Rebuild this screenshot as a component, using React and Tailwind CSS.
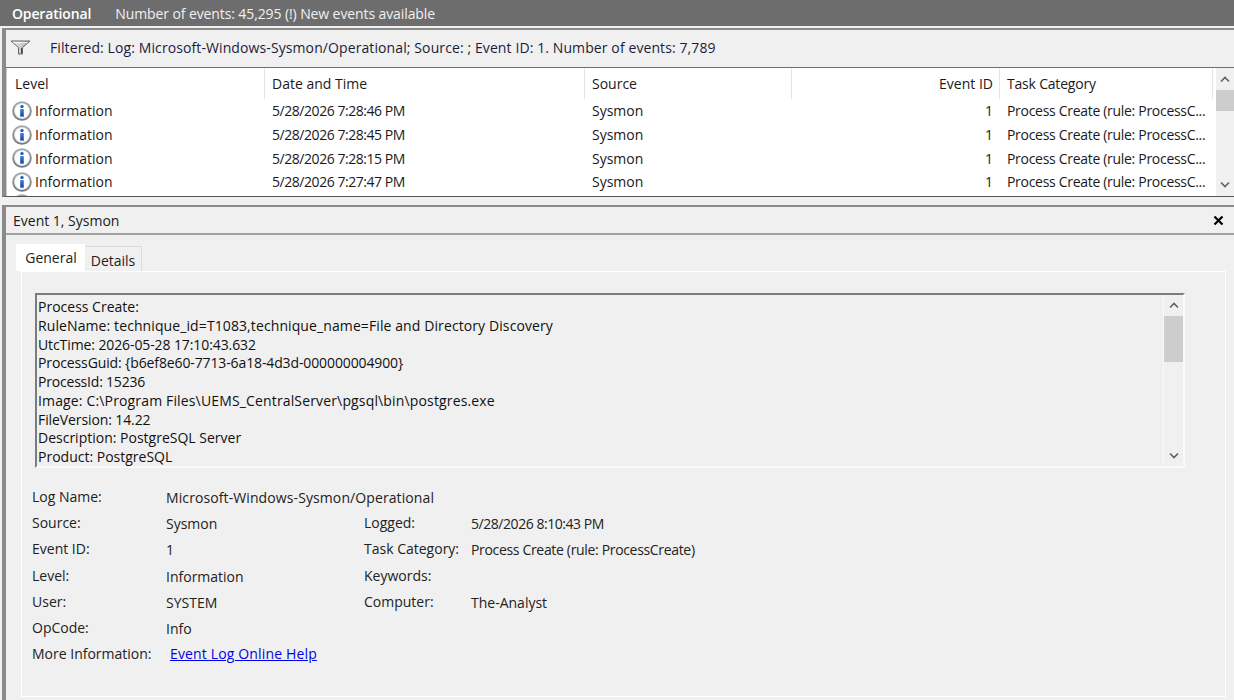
const font = { fontFamily: '"Open Sans", "Noto Sans", sans-serif' };

const rows = [
  "5/28/2026 7:28:46 PM",
  "5/28/2026 7:28:45 PM",
  "5/28/2026 7:28:15 PM",
  "5/28/2026 7:27:47 PM",
];

const messageLines = [
  ["Process Create:", "tracking-[0px]"],
  ["RuleName: technique_id=T1083,technique_name=File and Directory Discovery", "tracking-[0.1px]"],
  ["UtcTime: 2026-05-28 17:10:43.632", "tracking-[-0.1px]"],
  ["ProcessGuid: {b6ef8e60-7713-6a18-4d3d-000000004900}", "tracking-[-0.12px]"],
  ["ProcessId: 15236", "tracking-[-0.2px]"],
  ["Image: C:\\Program Files\\UEMS_CentralServer\\pgsql\\bin\\postgres.exe", "tracking-[0.15px]"],
  ["FileVersion: 14.22", "tracking-[-0.1px]"],
  ["Description: PostgreSQL Server", "tracking-[0px]"],
  ["Product: PostgreSQL", "tracking-[0px]"],
];

const InfoIcon = ({ id }) => (
  <svg width="20" height="20" viewBox="0 0 20 20" className="shrink-0">
    <defs>
      <linearGradient id={`ring${id}`} x1="0" y1="0" x2="0" y2="1">
        <stop offset="0%" stopColor="#a6a9ae" />
        <stop offset="100%" stopColor="#74777d" />
      </linearGradient>
      <linearGradient id={`blue${id}`} x1="0" y1="0" x2="0" y2="1">
        <stop offset="0%" stopColor="#3f86e0" />
        <stop offset="100%" stopColor="#123f9e" />
      </linearGradient>
    </defs>
    <circle cx="10" cy="10" r="9.8" fill={`url(#ring${id})`} />
    <circle cx="10" cy="10" r="8" fill="#dfe1e5" />
    <circle cx="10" cy="9.8" r="7" fill="#ffffff" />
    <circle cx="10" cy="5.4" r="1.7" fill={`url(#blue${id})`} />
    <path d="M8.2 8h3.6v7.6H8.2z" fill={`url(#blue${id})`} />
  </svg>
);

const FunnelIcon = () => (
  <svg width="21" height="15" viewBox="0 0 21 15">
    <defs>
      <linearGradient id="funnelFill" x1="0" y1="0" x2="1" y2="0">
        <stop offset="0%" stopColor="#f2f2f2" />
        <stop offset="100%" stopColor="#a8a8a8" />
      </linearGradient>
    </defs>
    <path d="M1 1h19l-7.5 6.5V14h-4V7.5z" fill="url(#funnelFill)" stroke="#666" strokeWidth="1" />
    <path d="M3.5 2.6h14" stroke="#fafafa" strokeWidth="1" />
    <path d="M11.5 8v5.5" stroke="#444" strokeWidth="1" />
  </svg>
);

const Chevron = ({ up }) => (
  <svg width="10" height="7" viewBox="0 0 10 7">
    <path d={up ? "M1 5.5l4-4 4 4" : "M1 1.5l4 4 4-4"} fill="none" stroke="#606060" strokeWidth="1.6" />
  </svg>
);

const Meta = ({ label, value, w = "w-[134px]", valueClass = "" }) => (
  <div className="flex h-[26.3px] items-center">
    <span className={`${w} shrink-0 -translate-y-px text-[#222]`}>{label}</span>
    <span className={`text-[#222] ${valueClass}`}>{value}</span>
  </div>
);

export default function App() {
  return (
    <div style={font} className="flex h-[700px] w-[1234px] flex-col overflow-hidden bg-[#f0f0f0] text-[14px] text-[#1a1a1a]">
      {/* Title strip */}
      <div className="flex h-[26px] shrink-0 items-center bg-[#6d6d6d] pl-3 text-white">
        <span className="font-semibold tracking-[-0.15px]">Operational</span>
        <span className="ml-[24px] tracking-[-0.1px] text-[#f0f0f0]">Number of events: 45,295 (!) New events available</span>
      </div>

      {/* Filtered list */}
      <div className="ml-[2px] mt-[2px] flex h-[169px] shrink-0 flex-col border-t-2 border-l-4 border-[#8a8a8a] border-b border-b-[#555]">
        <div className="flex h-[38px] shrink-0 items-center border-b border-[#707070] pb-[3px] pl-[4px]">
          <FunnelIcon />
          <span className="ml-[19px] tracking-[0.1px] text-[#1c1c3a]">
            Filtered: Log: Microsoft-Windows-Sysmon/Operational; Source: ; Event ID: 1. Number of events: 7,789
          </span>
        </div>
        <div className="flex min-h-0 flex-1 overflow-hidden border-l border-[#c8c8c8] bg-white">
          <div className="min-w-0 flex-1">
            <div className="flex h-[31px] items-center">
              <div className="flex h-full w-[258px] items-center border-r border-[#e5e5e5] pl-2">Level</div>
              <div className="flex h-full w-[320px] items-center border-r border-[#e5e5e5] pl-[7px]">Date and Time</div>
              <div className="flex h-full w-[207px] items-center border-r border-[#e5e5e5] pl-[7px]">Source</div>
              <div className="flex h-full w-[208px] items-center justify-end border-r border-[#e5e5e5] pr-[6px]">Event ID</div>
              <div className="flex h-full w-[213px] items-center border-r border-[#e5e5e5] pl-[7px] tracking-[-0.2px]">Task Category</div>
            </div>
            {rows.map((time, i) => (
              <div key={time} className="flex h-[23.7px] items-center whitespace-nowrap">
                <div className="flex w-[258px] items-center gap-[3px] pl-[5px]">
                  <InfoIcon id={i} />
                  <span>Information</span>
                </div>
                <div className="w-[320px] pl-[7px] tracking-[-0.45px]">{time}</div>
                <div className="w-[207px] pl-[7px]">Sysmon</div>
                <div className="w-[208px] pr-[7px] text-right">1</div>
                <div className="flex-1 pl-[7px] tracking-[-0.3px]">Process Create (rule: ProcessC...</div>
              </div>
            ))}
            <div className="pl-[5px]"><InfoIcon id="next" /></div>
          </div>
          <div className="flex w-[18px] shrink-0 flex-col items-center bg-[#f0f0f0]">
            <div className="flex h-[22px] items-center"><Chevron up /></div>
            <div className="h-[21px] w-full bg-[#cdcdcd]" />
            <div className="flex-1" />
            <div className="flex h-[24px] items-center"><Chevron /></div>
          </div>
        </div>
      </div>

      {/* Detail pane */}
      <div className="ml-[2px] mt-[8px] flex min-h-0 flex-1 flex-col border-t-2 border-l-4 border-[#8a8a8a]">
        <div className="flex h-[28px] shrink-0 items-center justify-between border-b-2 border-[#a0a0a0] pl-[7px] pr-[10px] pt-[1px]">
          <span>Event 1, Sysmon</span>
          <svg width="11" height="11" viewBox="0 0 11 11">
            <path d="M1.5 1.5l8 8M9.5 1.5l-8 8" stroke="#000" strokeWidth="2.2" />
          </svg>
        </div>

        <div className="flex items-end pl-[10px] pt-[9px]">
          <div className="flex h-[27px] w-[69px] items-center justify-center bg-white pl-[1px] text-[#222]">General</div>
          <div className="flex h-[25px] w-[57px] items-center justify-center border-t border-r border-[#dcdcdc] pt-[2px] text-[#222]">Details</div>
        </div>

        <div className="ml-[15px] mr-[8px] h-[426px] shrink-0 border border-white bg-[#f0f0f0] pl-[13px] pr-[40px] pt-[21px]">
          <div className="flex h-[175px] border-t-2 border-l-2 border-[#7c7c7c] border-r-2 border-r-[#fafafa] border-b-2 border-b-[#fafafa]">
            <div className="min-w-0 flex-1 pl-[1px] pt-[3px] leading-[18.75px] text-[#111]">
              {messageLines.map(([line, spacing]) => (
                <div key={line} className={spacing}>{line}</div>
              ))}
            </div>
            <div className="flex w-[20px] shrink-0 flex-col items-center border-l border-[#f8f8f8]">
              <div className="flex h-[21px] items-center"><Chevron up /></div>
              <div className="h-[46px] w-full bg-[#cdcdcd]" />
              <div className="flex-1" />
              <div className="flex h-[22px] items-center"><Chevron /></div>
            </div>
          </div>

          <div className="-ml-[3px] mt-[16px]">
            <Meta label="Log Name:" value="Microsoft-Windows-Sysmon/Operational" valueClass="tracking-[0.1px]" />
            <div className="flex">
              <div className="w-[332px] shrink-0">
                <Meta label="Source:" value="Sysmon" />
                <Meta label="Event ID:" value="1" />
                <Meta label="Level:" value="Information" />
                <Meta label="User:" value="SYSTEM" />
                <Meta label="OpCode:" value="Info" />
              </div>
              <div>
                <Meta label="Logged:" value="5/28/2026 8:10:43 PM" w="w-[107px]" valueClass="tracking-[-0.45px]" />
                <Meta label="Task Category:" value="Process Create (rule: ProcessCreate)" w="w-[107px]" valueClass="tracking-[-0.33px]" />
                <Meta label="Keywords:" value="" w="w-[107px]" />
                <Meta label="Computer:" value="The-Analyst" w="w-[107px]" />
              </div>
            </div>
            <div className="flex h-[24px] items-center">
              <span className="w-[138px] shrink-0 text-[#222]">More Information:</span>
              <a href="#" className="tracking-[0.15px] text-[#0000ee] underline">Event Log Online Help</a>
            </div>
          </div>
        </div>
      </div>
    </div>
  );
}
